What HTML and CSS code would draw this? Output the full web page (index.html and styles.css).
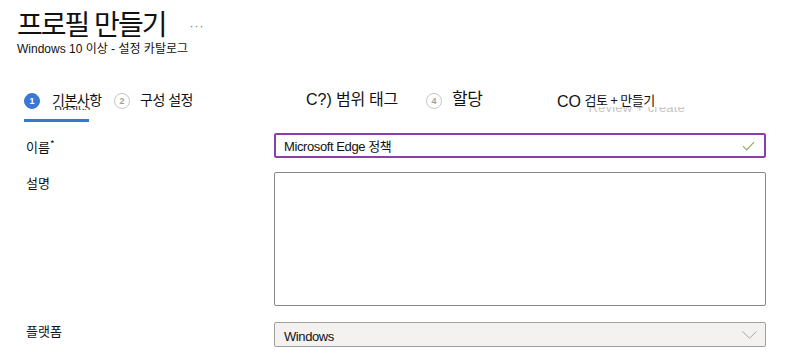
FILE: index.html
```html
<!DOCTYPE html>
<html lang="ko">
<head>
    <meta charset="UTF-8">
    <meta name="viewport" content="width=device-width, initial-scale=1.0">
    <title>프로필 만들기</title>
    <link rel="stylesheet" href="styles.css">
</head>
<body>
    <div class="page">
        <div class="header">
            <h1 class="title">프로필 만들기</h1>
            <span class="more">···</span>
        </div>
        <div class="subtitle">Windows 10 이상 - 설정 카탈로그</div>

        <!-- Wizard steps -->
        <div class="steps">
            <div class="step step-basics active">
                <span class="num">1</span>
                <span class="label">기본사항<span class="ghost">Basics</span></span>
            </div>
            <div class="step step-config">
                <span class="num">2</span>
                <span class="label">구성 설정</span>
            </div>
            <div class="step step-scope">
                <span class="label"><span class="latin">C?)</span> 범위 태그</span>
            </div>
            <div class="step step-assign">
                <span class="num">4</span>
                <span class="label big">할당</span>
            </div>
            <div class="step step-review">
                <span class="label"><span class="latin">CO</span> <span class="small">검토 + 만들기<span class="ghost light">Review + create</span></span></span>
            </div>
        </div>

        <!-- Basics form -->
        <div class="form">
            <label class="field-label">이름<span class="req">*</span></label>
            <div class="input valid">
                <span>Microsoft Edge 정책</span>
                <svg class="check" width="13" height="10" viewBox="0 0 13 10">
                    <path d="M1 5.2 L4.6 8.8 L12 1.2" fill="none" stroke="#8db255" stroke-width="1.2"/>
                </svg>
            </div>

            <label class="field-label">설명</label>
            <div class="textarea"></div>

            <label class="field-label">플랫폼</label>
            <div class="input select">
                <span>Windows</span>
                <svg class="chevron" width="15" height="8" viewBox="0 0 15 8">
                    <path d="M0.5 0.5 L7.5 7.2 L14.5 0.5" fill="none" stroke="#a8a6a4" stroke-width="1"/>
                </svg>
            </div>
        </div>
    </div>
</body>
</html>
```

FILE: styles.css
```css
body {
    margin: 0;
    padding: 0;
    background-color: #fff;
    color: #111;
    font-family: "Liberation Sans", "Noto Sans CJK KR", sans-serif;
}

.page {
    padding: 5px 0 0 17px;
}

.header {
    display: flex;
    align-items: center;
    height: 37px;
}

.title {
    margin: 0;
    font-family: "Noto Sans CJK KR", sans-serif;
    font-size: 28px;
    font-weight: 400;
    letter-spacing: -2px;
    line-height: 37px;
}

.more {
    margin-left: 24px;
    margin-top: 4px;
    color: #777;
    font-size: 12px;
    letter-spacing: 1px;
}

.subtitle {
    font-size: 12px;
    line-height: 14px;
    letter-spacing: 0;
}

/* steps */
.steps {
    display: flex;
    margin: 34px 0 0 7px;
    height: 30px;
}

.step {
    display: flex;
    align-items: flex-start;
    gap: 12px;
    position: relative;
    font-family: "Noto Sans CJK KR", sans-serif;
    font-size: 14px;
    line-height: 18px;
    letter-spacing: -0.5px;
}

.step-basics { width: 90px; }
.step-config { width: 192px; gap: 10px; }
.step-scope { width: 120px; font-size: 16px; letter-spacing: -0.3px; margin-top: -1px; }
.step-assign { width: 131px; gap: 10px; }

.num {
    width: 14px;
    height: 14px;
    border: 1px solid #c8c6c4;
    border-radius: 50%;
    color: #a19f9d;
    font-family: "Liberation Sans", sans-serif;
    font-size: 9px;
    font-weight: bold;
    line-height: 14px;
    text-align: center;
    letter-spacing: 0;
    margin-top: 3px;
}

.active .num {
    background-color: #3a78d4;
    border-color: #3a78d4;
    color: #fff;
}

.active::after {
    content: "";
    position: absolute;
    left: 0;
    top: 29px;
    width: 65px;
    height: 3px;
    background-color: #3a76d0;
}

.label {
    position: relative;
    white-space: nowrap;
}

.label.big {
    font-size: 17px;
    margin-top: -1px;
}

.latin {
    font-family: "Liberation Sans", sans-serif;
    font-size: 16px;
    letter-spacing: 0;
}

.step-review .latin {
    vertical-align: -2px;
}

.small {
    position: relative;
    font-size: 13px;
}

.ghost {
    position: absolute;
    left: 2px;
    top: 16px;
    height: 4px;
    overflow: hidden;
    font-family: "Liberation Sans", sans-serif;
    font-size: 12px;
    line-height: 2px;
    color: #3b3a39;
    letter-spacing: 0.2px;
}

.ghost.light {
    left: 4px;
    top: 17px;
    height: 5px;
    color: #c8c6c4;
    font-size: 13px;
}

/* form */
.form {
    display: grid;
    grid-template-columns: 248px 492px;
    row-gap: 14px;
    margin: 13px 0 0 9px;
}

.field-label {
    font-family: "Noto Sans CJK KR", sans-serif;
    font-size: 13px;
    padding-top: 2px;
    line-height: 18px;
}

.req {
    font-size: 10px;
    vertical-align: 4px;
}

.input {
    display: flex;
    align-items: center;
    justify-content: space-between;
    height: 21px;
    padding: 0 6px 0 9px;
    border: 1px solid #8a8886;
    border-radius: 2px;
    font-size: 13px;
    letter-spacing: -0.4px;
}

.valid {
    border: 2px solid #8a3fb0;
    height: 21px;
    padding-left: 8px;
}

.check {
    margin-right: 3px;
}

.textarea {
    height: 132px;
    border: 1px solid #8a8886;
    border-radius: 2px;
}

.select {
    margin-top: 2px;
    background-color: #f3f2f1;
    border-color: #a19f9d;
    height: 23px;
    padding-right: 8px;
}

.select span {
    margin-top: 4px;
}
```
